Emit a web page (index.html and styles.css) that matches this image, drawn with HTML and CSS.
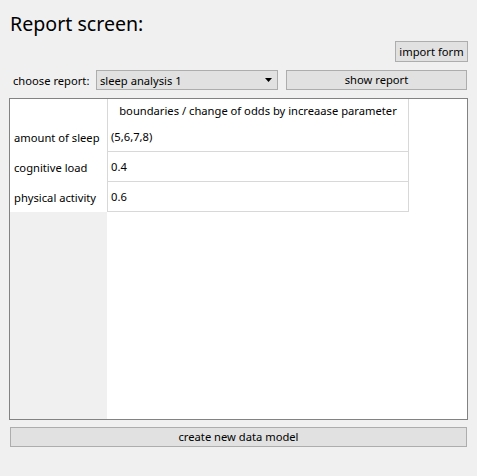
FILE: index.html
```html
<!DOCTYPE html>
<html>
<head>
<meta charset="utf-8">
<link rel="stylesheet" href="styles.css">
</head>
<body>
<div class="window">
  <h1 class="title">Report screen:</h1>
  <div class="import-row">
    <button class="btn import-btn">import form</button>
  </div>
  <div class="choose-row">
    <span class="choose-label">choose report:</span>
    <div class="combo">
      <span class="combo-text">sleep analysis 1</span>
      <svg class="combo-arrow" width="7" height="4" viewBox="0 0 7 4"><polygon points="0,0 7,0 3.5,4" fill="#000"/></svg>
    </div>
    <button class="btn show-btn">show report</button>
  </div>
  <div class="table-frame">
    <div class="row-headers">
      <div class="corner"></div>
      <div class="rh">amount of sleep</div>
      <div class="rh">cognitive load</div>
      <div class="rh">physical activity</div>
      <div class="rh-rest"></div>
    </div>
    <div class="cells-area">
      <div class="cells">
        <div class="col-head">boundaries / change of odds by increaase parameter</div>
        <div class="cell">(5,6,7,8)</div>
        <div class="cell">0.4</div>
        <div class="cell">0.6</div>
      </div>
    </div>
  </div>
  <button class="btn create-btn">create new data model</button>
</div>
</body>
</html>
```
FILE: styles.css
```css
html, body {
  margin: 0;
  padding: 0;
  background: #f0f0f0;
}
body {
  font-family: "Noto Sans", "Open Sans", sans-serif;
  font-size: 11.2px;
  color: #000;
}
.window {
  width: 477px;
  height: 476px;
  box-sizing: border-box;
  padding: 0 9px 0 9px;
  display: flex;
  flex-direction: column;
}
.title {
  margin: 10px 0 0 1px;
  font-size: 19.6px;
  font-weight: normal;
  line-height: 28px;
  height: 28px;
}
.import-row {
  display: flex;
  justify-content: flex-end;
  margin-top: 3px;
}
.btn {
  font-family: inherit;
  font-size: 11.2px;
  color: #000;
  background: #e1e1e1;
  border: 1px solid #adadad;
  border-radius: 0;
  padding: 0;
  margin: 0;
  box-sizing: border-box;
  line-height: 18px;
}
.import-btn {
  width: 73px;
  height: 21px;
}
.choose-row {
  display: flex;
  align-items: center;
  height: 20px;
  margin-top: 8px;
}
.choose-label {
  width: 87px;
  padding-left: 4px;
  box-sizing: border-box;
}
.combo {
  width: 182px;
  height: 20px;
  box-sizing: border-box;
  border: 1px solid #adadad;
  background: #e1e1e1;
  display: flex;
  align-items: center;
  justify-content: space-between;
  padding: 0 5px 0 3px;
}
.combo-arrow {
  display: block;
}
.show-btn {
  margin-left: 8px;
  flex: 1;
  height: 20px;
  margin-right: 1px;
}
.table-frame {
  margin-top: 8px;
  height: 322px;
  box-sizing: border-box;
  border: 1px solid #828282;
  display: flex;
  background: #fff;
}
.row-headers {
  width: 97px;
  display: flex;
  flex-direction: column;
  background: #f0f0f0;
}
.corner {
  height: 23px;
  background: #fff;
}
.rh {
  height: 30px;
  background: #fff;
  display: flex;
  align-items: center;
  padding-left: 4px;
}
.rh-rest {
  flex: 1;
}
.cells-area {
  flex: 1;
  background: #fff;
}
.cells {
  width: 302px;
  box-sizing: border-box;
  border-left: 1px solid #d8d8d8;
  border-right: 1px solid #d8d8d8;
}
.col-head {
  height: 23px;
  display: flex;
  align-items: center;
  justify-content: center;
}
.cell {
  height: 30px;
  box-sizing: border-box;
  border-bottom: 1px solid #d8d8d8;
  display: flex;
  align-items: center;
  padding-left: 3px;
}
.create-btn {
  margin-top: 7px;
  margin-left: 1px;
  margin-right: 1px;
  height: 20px;
}
```
